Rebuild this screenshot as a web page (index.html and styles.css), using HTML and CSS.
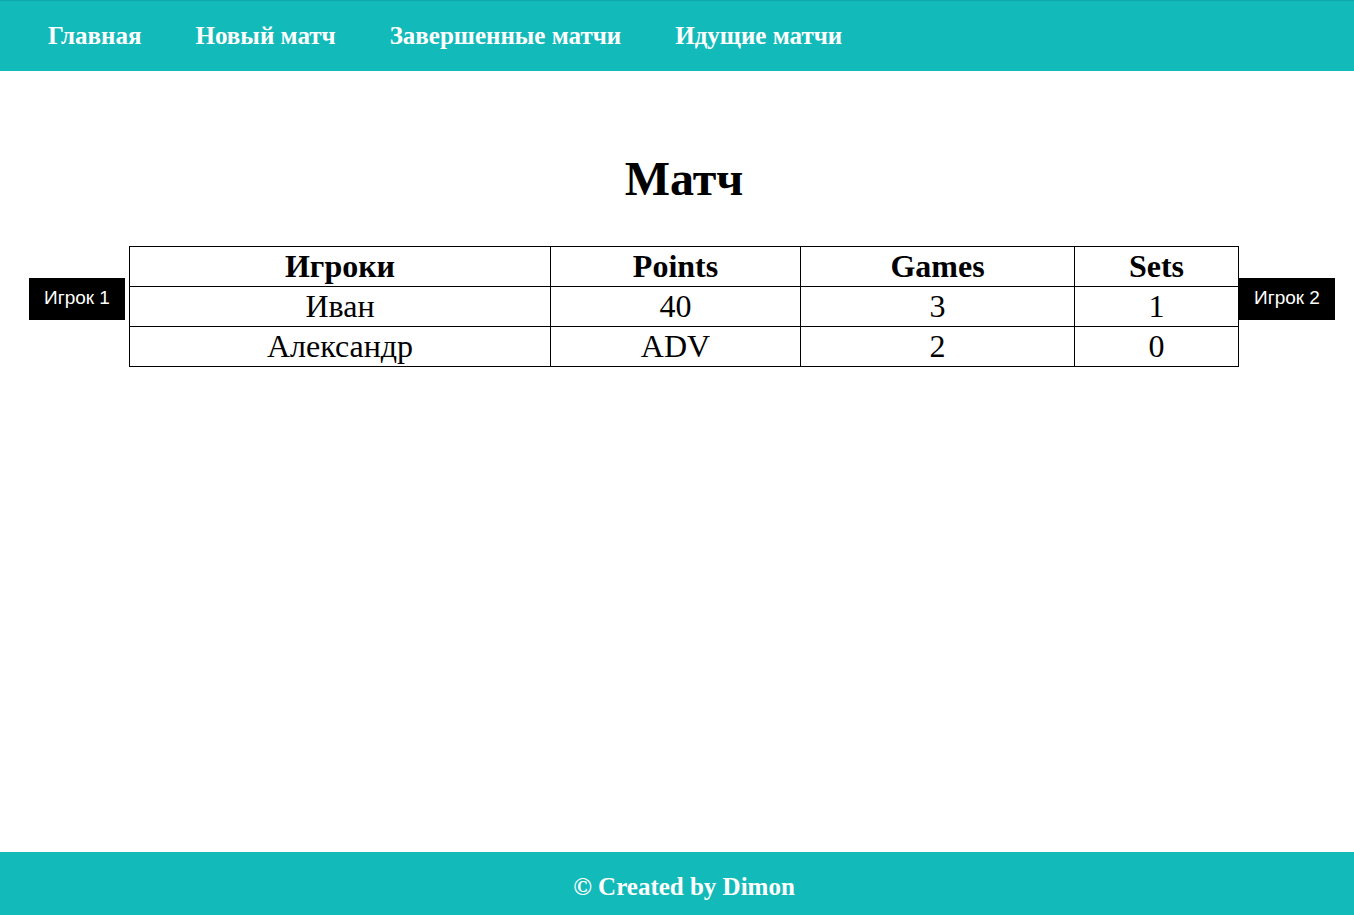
FILE: index.html
```html
<!DOCTYPE html>
<html lang="ru">
<head>
<meta charset="utf-8">
<title>Матч</title>
<link rel="stylesheet" href="styles.css">
</head>
<body>
<header class="topbar">
  <nav class="nav">
    <a class="nav-link" href="#">Главная</a>
    <a class="nav-link" href="#">Новый матч</a>
    <a class="nav-link" href="#">Завершенные матчи</a>
    <a class="nav-link" href="#">Идущие матчи</a>
  </nav>
</header>
<main class="content">
  <h1 class="title">Матч</h1>
  <div class="board">
    <button class="player-btn left">Игрок 1</button>
    <table class="score">
      <thead>
        <tr><th class="c1">Игроки</th><th class="c2">Points</th><th class="c3">Games</th><th class="c4">Sets</th></tr>
      </thead>
      <tbody>
        <tr><td>Иван</td><td>40</td><td>3</td><td>1</td></tr>
        <tr><td>Александр</td><td>ADV</td><td>2</td><td>0</td></tr>
      </tbody>
    </table>
    <button class="player-btn right">Игрок 2</button>
  </div>
</main>
<footer class="footer">© Created by Dimon</footer>
</body>
</html>
```
FILE: styles.css
```css
html, body {
  margin: 0;
  padding: 0;
  height: 100%;
}
body {
  font-family: "Liberation Serif", serif;
  display: flex;
  flex-direction: column;
  min-height: 915px;
  background: #fff;
}
.topbar {
  background: #12baba;
  height: 71px;
  border-top: 1px solid #0fa7a7;
  box-sizing: border-box;
}
.nav {
  display: flex;
  gap: 54px;
  padding-left: 48px;
  height: 100%;
  align-items: center;
}
.nav-link {
  color: #fff;
  text-decoration: none;
  font-weight: bold;
  font-size: 25px;
  margin-top: -1px;
}
.content {
  flex: 1;
}
.title {
  text-align: center;
  font-size: 48px;
  font-weight: bold;
  margin: 0;
  padding-top: 81px;
  padding-left: 14px;
  line-height: 53px;
}
.board {
  display: flex;
  margin-top: 41px;
  padding-left: 29px;
}
.player-btn {
  background: #000;
  color: #fff;
  border: 0;
  font-family: "Liberation Sans", Arial, sans-serif;
  font-size: 19px;
  width: 96px;
  height: 42px;
  margin-top: 32px;
  padding: 0 0 2px;
}
.player-btn.left {
  margin-right: 4px;
}
.score {
  border-collapse: collapse;
  table-layout: fixed;
  font-size: 32px;
}
.score th, .score td {
  border: 1px solid #000;
  text-align: center;
  height: 39px;
  padding: 0;
  line-height: 33px;
}
.score th {
  font-weight: bold;
}
.c1 { width: 420px; }
.c2 { width: 249px; }
.c3 { width: 273px; }
.c4 { width: 163px; }
.footer {
  background: #12baba;
  color: #fff;
  height: 63px;
  box-sizing: border-box;
  padding-top: 6px;
  display: flex;
  align-items: center;
  justify-content: center;
  font-weight: bold;
  font-size: 25px;
  padding-left: 14px;
}
```
